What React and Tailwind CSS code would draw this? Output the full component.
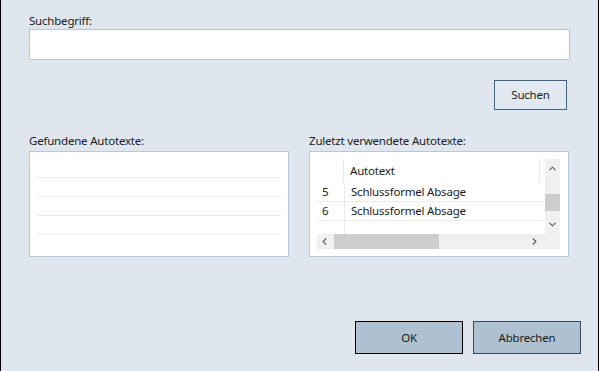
import { ChevronUp, ChevronDown, ChevronLeft, ChevronRight } from 'lucide-react'

function App() {
  const rows = [
    { nr: '5', text: 'Schlussformel Absage' },
    { nr: '6', text: 'Schlussformel Absage' },
  ]

  return (
    <div
      className="w-[599px] h-[371px] bg-[#dfe6ee] border-l border-r border-black text-[11.5px] tracking-[-0.2px] text-[#1b1b1b] flex flex-col pl-[28px] pr-[28px] overflow-hidden"
      style={{ fontFamily: '"Segoe UI", "Noto Sans", sans-serif' }}
    >
      {/* Suchbegriff */}
      <label className="mt-[12px] h-[17px] leading-[17px]">Suchbegriff:</label>
      <div className="h-[31px] w-[541px] bg-white border border-[#b8c7d5]"></div>

      <div className="flex justify-end mt-[20px] w-[541px] pr-[3px]">
        <button className="w-[73px] h-[30px] border border-[#46647e] bg-[#e1e8ef] leading-none">
          Suchen
        </button>
      </div>

      {/* Listen */}
      <div className="flex gap-[20px] mt-[22px]">
        <div className="flex flex-col w-[260px]">
          <span className="h-[19px] leading-[17px]">Gefundene Autotexte:</span>
          <div className="h-[106px] bg-white border border-[#b8c7d5] px-[7px] pt-[25px] flex flex-col">
            <div className="h-[19px] border-t border-[#ececec]"></div>
            <div className="h-[19px] border-t border-[#ececec]"></div>
            <div className="h-[19px] border-t border-[#ececec]"></div>
            <div className="h-[19px] border-t border-[#ececec]"></div>
          </div>
        </div>

        <div className="flex flex-col w-[260px]">
          <span className="h-[19px] leading-[17px]">Zuletzt verwendete Autotexte:</span>
          <div className="h-[106px] bg-white border border-[#b8c7d5] pl-[7px] pr-[8px] pt-[7px] pb-[7px]">
            <div className="flex flex-col h-full">
              <div className="flex flex-1 min-h-0">
                {/* Tabelleninhalt */}
                <div className="flex-1 flex flex-col overflow-hidden">
                  <div className="flex h-[24px] shrink-0">
                    <div className="w-[27px] border-r border-[#e8e8e8]"></div>
                    <div className="w-[196px] border-r border-[#e8e8e8] pl-[6px] leading-[24px]">Autotext</div>
                  </div>
                  {rows.map((row) => (
                    <div key={row.nr} className="flex h-[19px] shrink-0 border-b border-[#ececec] w-[226px]">
                      <div className="w-[28px] pl-[5px] leading-[18px] border-r border-[#ececec]">{row.nr}</div>
                      <div className="pl-[6px] leading-[18px]">{row.text}</div>
                    </div>
                  ))}
                  <div className="flex flex-1">
                    <div className="w-[28px] border-r border-[#ececec]"></div>
                  </div>
                </div>
                {/* vertikale Scrollleiste */}
                <div className="w-[15px] bg-[#f0f0f0] flex flex-col items-center">
                  <ChevronUp size={11} strokeWidth={2.5} className="text-[#606060] mt-[4px]" />
                  <div className="flex-1"></div>
                  <div className="w-[15px] h-[17px] bg-[#cdcdcd]"></div>
                  <div className="h-[8px]"></div>
                  <ChevronDown size={11} strokeWidth={2.5} className="text-[#606060] mb-[4px]" />
                </div>
              </div>
              {/* horizontale Scrollleiste */}
              <div className="h-[15px] bg-[#f0f0f0] flex items-center shrink-0">
                <ChevronLeft size={11} strokeWidth={2.5} className="text-[#606060] ml-[2px]" />
                <div className="w-[105px] h-[15px] bg-[#cdcdcd] ml-[4px]"></div>
                <div className="flex-1"></div>
                <ChevronRight size={11} strokeWidth={2.5} className="text-[#606060] mr-[20px]" />
              </div>
            </div>
          </div>
        </div>
      </div>

      {/* Buttons */}
      <div className="flex justify-end gap-[10px] mt-[64px] w-[552px]">
        <button className="w-[108px] h-[33px] border border-black bg-[#aec1d0]">OK</button>
        <button className="w-[108px] h-[33px] border border-[#33495c] bg-[#aec1d0]">Abbrechen</button>
      </div>
    </div>
  )
}

export default App
